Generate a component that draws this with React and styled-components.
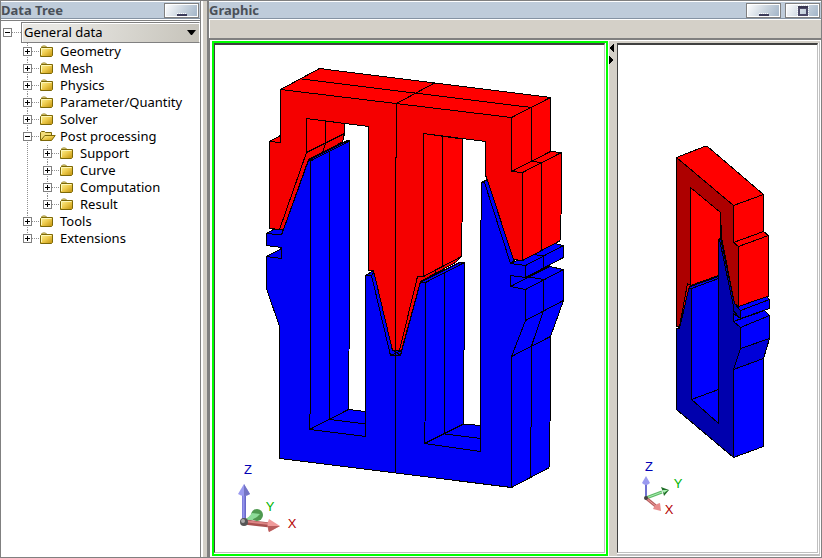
import React, { useState } from "react";
import styled, { createGlobalStyle } from "styled-components";

const GlobalStyle = createGlobalStyle`
  * {
    box-sizing: border-box;
  }
  body {
    margin: 0;
    background: #fff;
    color: #000;
    font-family: "Noto Sans", Tahoma, "Liberation Sans", sans-serif;
    font-size: 13px;
  }
`;

const Window = styled.div`
  display: grid;
  grid-template-columns: 200px 8px minmax(0, 1fr);
  min-height: 100vh;
  border: 1px solid #808080;
`;
const Splitter = styled.div`
  background: #d4d0c8;
  border-left: 2px solid #fff;
  border-right: 2px solid #808080;
`;
const Panel = styled.section`
  display: flex;
  flex-direction: column;
  min-width: 0;
`;
const TreePanel = styled(Panel)`
  border-right: 1px solid #808080;
`;
const TitleBar = styled.header`
  display: flex;
  align-items: center;
  gap: 4px;
  height: 18px;
  padding-right: 1px;
  background: #bfccda;
  border-top: 1px solid #fff;
  border-bottom: 1px solid #8593a3;
`;
const Title = styled.h2`
  flex: 1;
  margin: 0;
  color: #4a5058;
  font-size: 13px;
  line-height: 16px;
  font-weight: bold;
`;
const WindowButton = styled.button`
  display: flex;
  justify-content: center;
  width: 35px;
  height: 15px;
  padding: 0;
  border: 1px solid #808080;
  box-shadow: inset 1px 1px #fff, inset -1px -1px #fff;
  background: linear-gradient(120deg, #fff, #c8d3de 55%, #9fb2c6);
`;

/* tree */
const Tree = styled.nav`
  flex: 1;
  padding-top: 1px;
`;
const RootRow = styled.div`
  display: flex;
  align-items: center;
  height: 23px;
  padding-left: 2px;
  border-top: 1px solid #808080;
`;
const RootSelect = styled.label`
  display: flex;
  flex: 1;
  align-items: center;
  height: 21px;
  padding-right: 3px;
  border: 1px solid #808080;
  border-right-color: #fff;
  box-shadow: inset 1px 1px #fff;
  background: linear-gradient(100deg, #e8e7e3 20%, #c6c3ba);
`;
const Select = styled.select`
  flex: 1;
  min-width: 0;
  padding: 0 2px;
  border: none;
  background: none;
  appearance: none;
  color: #000;
  font: inherit;
`;
const Branch = styled.ul`
  margin: 0;
  padding: 0 0 0 20px;
  list-style: none;
`;
const Leaf = styled.li`
  background: repeating-linear-gradient(#909090 0 1px, transparent 1px 2px) 6px 0 / 1px 100% no-repeat;
  &:last-child {
    background-size: 1px 9px;
  }
`;
const Row = styled.div`
  display: flex;
  align-items: center;
  height: 17px;
  padding-left: 2px;
`;
const Toggle = styled.button`
  display: block;
  width: 9px;
  height: 9px;
  padding: 0;
  border: none;
  background: #fff;
  svg {
    display: block;
  }
`;
const Dots = styled.span`
  width: ${(p) => p.$width};
  height: 1px;
  background: repeating-linear-gradient(90deg, #909090 0 1px, transparent 1px 2px);
`;
const Label = styled.span`
  padding-left: 4px;
  line-height: 17px;
  white-space: nowrap;
`;

/* graphic */
const Toolbar = styled.div`
  height: 19px;
  margin-left: 1px;
  background: #d4d0c8;
  border-top: 1px solid #fff;
`;
const Views = styled.div`
  display: grid;
  grid-template-columns: minmax(0, 396fr) 9px minmax(0, 203fr);
  flex: 1;
  border-top: 2px solid #808080;
  border-left: 1px solid #808080;
  padding: 1px 1px 1px 2px;
`;
const View = styled.div`
  padding: 0 1px 1px 0;
  border-style: solid;
  border-width: ${(p) => (p.$active ? "2px" : "2px 1px 2px 0")};
  border-color: ${(p) => (p.$active ? "#00ff00" : "#d4d0c8 #c0c0c0 #c0c0c0")};
`;
const Canvas = styled.div`
  height: 100%;
  overflow: hidden;
  border-style: solid;
  border-width: 2px 1px 1px 1px;
  border-color: #404040 #c0c0c0 #c0c0c0 #404040;
  background: #fff;
`;
const Divider = styled.div`
  display: flex;
  flex-direction: column;
  gap: 4px;
  padding-top: 3px;
  background: #d4d0c8;
  border-left: 1px solid #fff;
`;
const DividerButton = styled.button`
  display: block;
  height: 8px;
  padding: 0;
  border: none;
  background: none;
  svg {
    display: block;
  }
`;
const Drawing = styled.svg`
  display: block;
  font-family: "Liberation Sans", sans-serif;
  font-size: 13px;
`;

const treeData = [
  { name: "Geometry" },
  { name: "Mesh" },
  { name: "Physics" },
  { name: "Parameter/Quantity" },
  { name: "Solver" },
  {
    name: "Post processing",
    children: [{ name: "Support" }, { name: "Curve" }, { name: "Computation" }, { name: "Result" }],
  },
  { name: "Tools" },
  { name: "Extensions" },
];

const ToggleBox = ({ open, name, onClick }) => (
  <Toggle type="button" aria-label={name} aria-expanded={open} onClick={onClick}>
    <svg width="9" height="9" shapeRendering="crispEdges">
      <rect x="0.5" y="0.5" width="8" height="8" fill="#fff" stroke="#808080" />
      <path d={open ? "M2 4.5h5" : "M2 4.5h5M4.5 2v5"} stroke="#000" />
    </svg>
  </Toggle>
);

const Folder = ({ open }) => (
  <svg width="16" height="13" viewBox="0 0 16 13" aria-hidden="true">
    <defs>
      <linearGradient id="folder" x2="1" y2="1">
        <stop offset="0.1" stopColor="#fbee8c" />
        <stop offset="0.5" stopColor="#ecc94a" />
        <stop offset="1" stopColor="#bf900a" />
      </linearGradient>
    </defs>
    {open ? (
      <>
        <path d="M0.5 10.5v-8l1-1h3l1 1h6v3" fill="#f3dc78" stroke="#7c6808" />
        <path d="M0.8 10.5l4-5h10.4l-3.7 5z" fill="url(#folder)" stroke="#7c6808" />
      </>
    ) : (
      <>
        <path d="M1.5 3v-1l1-1h3l1 1v1" fill="#fbf0a0" stroke="#958020" />
        <path d="M0.5 3.5l1-1h11v8l-1 1h-11z" fill="url(#folder)" stroke="#7c6808" />
        <path d="M1.5 10v-6.5h10" fill="none" stroke="#fdf6b8" />
      </>
    )}
  </svg>
);

const TreeNode = ({ node }) => {
  const [open, setOpen] = useState(Boolean(node.children));
  return (
    <Leaf>
      <Row>
        <ToggleBox open={open} name={node.name} onClick={() => setOpen(!open)} />
        <Dots $width="8px" />
        <Folder open={open} />
        <Label>{node.name}</Label>
      </Row>
      {open && node.children && (
        <Branch>
          {node.children.map((child) => (
            <TreeNode key={child.name} node={child} />
          ))}
        </Branch>
      )}
    </Leaf>
  );
};

const MinimizeIcon = () => (
  <svg width="12" height="13" shapeRendering="crispEdges">
    <path d="M1 9.5h10" stroke="#fff" strokeDasharray="1 1" />
    <path d="M1 11h10" stroke="#3c3c5a" strokeWidth="2" />
  </svg>
);

const MaximizeIcon = () => (
  <svg width="12" height="13" shapeRendering="crispEdges">
    <rect x="0.5" y="1.5" width="11" height="11" fill="none" stroke="#fff" strokeDasharray="1 1" />
    <path d="M1 2h10v10h-10zM3 5v5h6v-5z" fill="#4c4a68" fillRule="evenodd" />
    <path d="M1 2h10v2h-10z" fill="#3a3852" />
  </svg>
);

const Faces = ({ fill, items }) => items.map((points) => <polygon key={points} points={points} fill={fill} />);

const FrontModel = () => (
  <g shapeRendering="crispEdges" stroke="#000" strokeWidth="1" strokeLinejoin="bevel">
    {/* lower core, blue */}
    <Faces
      fill="#0000f5"
      items={[
        "266.5,233.5 273.5,229.5 283.5,226.5 281.5,235",
        "266.5,256.5 281.5,248.5 281.5,258.5",
        "365.5,275.5 373.5,270.5 378.5,290 371.5,275.5",
      ]}
    />
    <Faces
      fill="#0000ff"
      items={[
        "310.5,161 349.5,141 349.5,295 348.5,409.5 309.5,429.5",
        "309.5,429.5 348.5,409.5 365.5,411.5 365.5,436.5",
        "425.5,282.5 464.5,262.5 464.5,279 463.5,424 424.5,443.5 425.5,400",
        "424.5,443.5 463.5,424 480.5,425.5 480.5,451.5",
        "511.5,356.5 550.5,336.5 550.5,378.5 549.5,467.5 511.5,487.5",
        "525.5,320.5 563.5,300.5 550.5,336.5 511.5,356.5",
        "510.5,275.5 525.5,277.5 549.5,265.5 549.5,267.5 510.5,286.5",
        "525.5,289.5 563.5,269.5 563.5,300.5 525.5,320.5",
        "510.5,286.5 549.5,266.5 563.5,269.5 525.5,289.5",
        "525.5,265.5 563.5,245.5 563.5,257.5 525.5,277.5",
        "510.5,263.5 554.5,243.5 563.5,245.5 525.5,265.5",
      ]}
    />
    <path
      fill="#0000f5"
      d="M266.5 233.5L281.5 235L308.5 160.5L310.5 161V400L309.5 429.5L365.5 436.5V275.5H371.5L390.5 355.5H400.5L420.5 282H425.5V400L424.5 443.5L480.5 451.5V260L481.5 182.5L484.5 182.5L510.5 263.5L525.5 265.5V277.5L510.5 275.5V286.5L525.5 289.5V320.5L511.5 356.5V487.5L279.5 458.5V326.5L266.5 288.5V256.5L281.5 258.5V247.5L266.5 245.5z"
    />
    <path fill="#0000f5" d="M308.5 160.5L347.5 140.5L349.5 141L310.5 161z" />
    <path fill="#0000f5" d="M420.5 282L460.5 262L464.5 262.5L425.5 282.5z" />
    <path fill="#0000f5" d="M481.5 182.5L487.5 179.5L514.5 260L510.5 263.5L484.5 182.5z" />
    <path fill="#0000f5" d="M371.5 275.5L374.5 271.5L393.5 350.5H401.5L400.5 355.5H390.5z" />
    <path
      fill="none"
      d="M329.5 151V419.5L365.5 424M444.5 272.5V434L480.5 438.5M543.5 256V267.5M543.5 279.5V310.5L531.5 346V378L530.5 477M510.5 263.5L530.5 254L543.5 256M529.5 277L543.5 279.5M390.5 355.5L401.5 350.5M393.5 350.5L400.5 355.5"
    />

    {/* upper core, red */}
    <Faces
      fill="#ff0000"
      items={[
        "280.5,89.5 319.5,68.5 550.5,97.5 511.5,117.5",
        "511.5,117.5 550.5,97.5 550.5,151.5 511.5,171.5",
        "511.5,171.5 550.5,151.5 561.5,152.5 522.5,172.5",
        "522.5,172.5 561.5,152.5 561.5,190 560.5,240.5 522.5,260.5",
        "306.5,118.5 344.5,123.5 344.5,133.5 306.5,152.5",
        "423.5,133.5 462.5,139 462.5,190 461.5,256.5 423.5,276.5",
        "269.5,141.5 280.5,135.5 280.5,142.5",
      ]}
    />
    <path fill="#f50000" d="M306.5 152.5L344.5 133.5L342.5 142L308.5 159.5L283.5 229.5L279.5 229.5z" />
    <path fill="#f50000" d="M417.5 276.5H423.5L461.5 256.5L455.5 262.5L420.5 281.5L401.5 350.5H398.5z" />
    <path
      fill="#f50000"
      d="M280.5 89.5L511.5 117.5V171.5L522.5 172.5V260.5L513.5 259.5L487.5 180.5L485.5 175V141.5L423.5 133.5V276.5H417.5L399.5 350.5H392.5L373.5 270.5H368.5V126.5L306.5 118.5V152.5L279.5 229.5L269.5 228.5V141.5L280.5 142.5z"
    />
    <path
      fill="none"
      d="M301.5 79L531.5 107.5V161.5L541.5 162.5V250.5M434.5 83L396.5 103.5V157L395.5 157V472.5M325.5 121V143.5L322.5 153M442.5 136.5V266.5L435.5 270V274"
    />
  </g>
);

const SideModel = () => (
  <g shapeRendering="crispEdges" stroke="#000" strokeWidth="1" strokeLinejoin="bevel">
    <Faces
      fill="#0000ff"
      items={[
        "691.5,288.5 718.5,278.5 718.5,423.5 691.5,399.5",
        "691.5,399.5 718.5,389.5 718.5,423.5",
        "733.5,369.5 763.5,358.5 763.5,446.5 733.5,457.5",
        "733.5,313.5 740.5,318.5 764.5,309.5 733.5,321.5",
        "740.5,327.5 769.5,315.5 769.5,338.5 740.5,348.5",
        "733.5,321.5 764.5,310.5 769.5,315.5 740.5,327.5",
        "740.5,310.5 769.5,299.5 769.5,308.5 740.5,318.5",
        "733.5,304.5 766.5,296.5 769.5,299.5 740.5,310.5",
      ]}
    />
    <polygon fill="#0000d8" points="740.5,348.5 769.5,338.5 763.5,358.5 733.5,369.5" />
    <path fill="#0000e8" d="M687.5 287.5L718.5 276.5V278.5L691.5 288.5z" />
    <path
      fill="#0000ad"
      d="M676.5 328.5H679.5L687.5 288.5H691.5V399.5L718.5 423.5V239.5L720.5 237.5L734.5 303.5L740.5 310.5V318.5L733.5 313.5V321.5L740.5 327.5V348.5L733.5 369.5V457.5L676.5 409.5z"
    />
    <Faces
      fill="#ff0000"
      items={[
        "676.5,157.5 704.5,146.5 707.5,146.5 763.5,194.5 733.5,205.5",
        "733.5,205.5 763.5,194.5 763.5,231.5 733.5,242.5",
        "733.5,242.5 763.5,231.5 768.5,235.5 738.5,246.5",
        "738.5,246.5 768.5,235.5 768.5,296 738.5,306.5",
        "690.5,187.5 720.5,212.5 720.5,237.5 718.5,239.5 718.5,275.5 690.5,285.5",
      ]}
    />
    <path fill="#e00000" d="M687.5 283.5L690.5 285.5L688.5 289.5L680.5 324.5L678.5 327.5z" />
    <path
      fill="#ad0000"
      d="M676.5 157.5L733.5 205.5V242.5L738.5 246.5V306.5L734.5 303.5L721.5 237.5L720.5 212.5L690.5 187.5V285.5L687.5 283.5L679.5 326.5H676.5z"
    />
    <path fill="none" d="M719.5 239.5L733.5 306.5M733.5 304.5V311L740.5 318.5" />
  </g>
);

const AxisLabel = styled.text`
  fill: ${(p) => p.$color};
  text-anchor: middle;
`;

const LargeAxes = () => (
  <g>
    <path d="M244 522L257 515" stroke="#68bd70" strokeWidth="4" />
    <circle cx="257" cy="515" r="6" fill="#4f9950" />
    <path d="M246 520L252 513L260 514L257 517L248 522z" fill="#8ddb98" />
    <path d="M244 522V494" stroke="#6868c8" strokeWidth="4" />
    <path d="M243.5 522V494" stroke="#9494ee" strokeWidth="2" />
    <path d="M244 484L250 494Q244 498 238 494z" fill="#9a9af0" />
    <path d="M244 484L250 494Q247 496 244 496z" fill="#7474c4" />
    <path d="M244 522L270 525" stroke="#a85050" strokeWidth="5" />
    <path d="M244 521L270 524" stroke="#dd8585" strokeWidth="2" />
    <path d="M280 526L269 519Q266 525 269 532z" fill="#f09a9a" />
    <path d="M280 526L268 526Q268 530 269 532z" fill="#b85c5c" />
    <circle cx="244" cy="522" r="4" fill="#555" />
    <circle cx="243" cy="521" r="2" fill="#aaa" />
    <AxisLabel x="248" y="474" $color="#0000b4">Z</AxisLabel>
    <AxisLabel x="270" y="511" $color="#00b400">Y</AxisLabel>
    <AxisLabel x="292" y="528" $color="#b40000">X</AxisLabel>
  </g>
);

const SmallAxes = () => (
  <g>
    <path d="M646 498V483" stroke="#7070d0" strokeWidth="2" />
    <path d="M646 476L650 483Q646 487 642 483z" fill="#9a9af0" />
    <path d="M646 498L662 492" stroke="#60b868" strokeWidth="3" />
    <path d="M646 498L662 492" stroke="#a8f0b0" strokeWidth="1" />
    <path d="M669 490L661 487L663 492L664 496z" fill="#207028" />
    <path d="M668 490L662 490L664 493z" fill="#a8f0b0" />
    <path d="M646 498L657 507" stroke="#b86060" strokeWidth="3" />
    <path d="M646 498L657 507" stroke="#f0a0a0" strokeWidth="1" />
    <path d="M661 511L660 503Q655 504 653 509z" fill="#e88c8c" />
    <circle cx="646" cy="498" r="2" fill="#444" />
    <AxisLabel x="649" y="471" $color="#0000b4">Z</AxisLabel>
    <AxisLabel x="678" y="488" $color="#00b400">Y</AxisLabel>
    <AxisLabel x="669" y="514" $color="#b40000">X</AxisLabel>
  </g>
);

const DataTree = () => {
  const [open, setOpen] = useState(true);
  return (
    <TreePanel>
      <TitleBar>
        <Title>Data Tree</Title>
        <WindowButton type="button" aria-label="Minimize data tree">
          <MinimizeIcon />
        </WindowButton>
      </TitleBar>
      <Tree>
        <RootRow>
          <ToggleBox open={open} name="General data" onClick={() => setOpen(!open)} />
          <Dots $width="9px" />
          <RootSelect>
            <Select aria-label="Data">
              <option>General data</option>
            </Select>
            <svg width="9" height="5" aria-hidden="true">
              <path d="M0 0h9l-4 5h-1z" />
            </svg>
          </RootSelect>
        </RootRow>
        {open && (
          <Branch>
            {treeData.map((node) => (
              <TreeNode key={node.name} node={node} />
            ))}
          </Branch>
        )}
      </Tree>
    </TreePanel>
  );
};

const Graphic = () => (
  <Panel>
    <TitleBar>
      <Title>Graphic</Title>
      <WindowButton type="button" aria-label="Minimize graphic">
        <MinimizeIcon />
      </WindowButton>
      <WindowButton type="button" aria-label="Maximize graphic">
        <MaximizeIcon />
      </WindowButton>
    </TitleBar>
    <Toolbar />
    <Views>
      <View $active>
        <Canvas>
          <Drawing width="389" height="507" viewBox="215 45 389 507">
            <FrontModel />
            <LargeAxes />
          </Drawing>
        </Canvas>
      </View>
      <Divider>
        <DividerButton type="button" aria-label="Collapse left view">
          <svg width="5" height="8" shapeRendering="crispEdges">
            <path d="M5 0v8l-5-4z" />
          </svg>
        </DividerButton>
        <DividerButton type="button" aria-label="Collapse right view">
          <svg width="5" height="8" shapeRendering="crispEdges">
            <path d="M0 0v8l5-4z" />
          </svg>
        </DividerButton>
      </Divider>
      <View>
        <Canvas>
          <Drawing width="199" height="507" viewBox="618 45 199 507">
            <SideModel />
            <SmallAxes />
          </Drawing>
        </Canvas>
      </View>
    </Views>
  </Panel>
);

const App = () => (
  <>
    <GlobalStyle />
    <Window>
      <DataTree />
      <Splitter />
      <Graphic />
    </Window>
  </>
);

export default App;
